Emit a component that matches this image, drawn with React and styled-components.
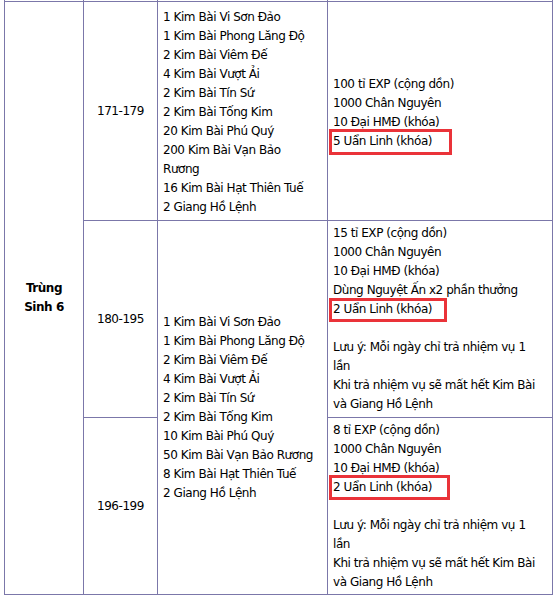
import React from 'react';
import styled, { createGlobalStyle } from 'styled-components';

const GlobalStyle = createGlobalStyle`
  html, body {
    margin: 0;
    padding: 0;
    background: #fff;
  }
  body {
    font-family: "DejaVu Sans", Verdana, sans-serif;
    font-size: 12px;
    color: #000;
  }
`;

const Page = styled.div`
  width: 556px;
  height: 597px;
  padding-left: 4px;
  box-sizing: border-box;
  overflow: hidden;
`;

const Table = styled.table`
  border-collapse: collapse;
  table-layout: fixed;
  width: 548px;
  letter-spacing: -0.45px;
`;

const Row = styled.tr`
  height: ${props => props.h}px;
`;

const Cell = styled.td`
  border: 1px solid #7b77a9;
  padding: ${props => `${props.pt || 0}px 5px 0`};
  vertical-align: middle;
  text-align: ${props => props.align || 'left'};
  line-height: 19px;
  font-weight: ${props => (props.bold ? 'bold' : 'normal')};
  white-space: nowrap;
`;

const CutCell = styled(Cell)`
  border-top: hidden;
  padding: 0;
  height: 1px;
  line-height: 1px;
`;

const Line = styled.div`
  min-height: 19px;
`;

const Marked = styled.div`
  position: relative;
  min-height: 19px;

  &::after {
    content: '';
    position: absolute;
    left: -4px;
    top: ${props => props.top}px;
    width: ${props => props.w}px;
    height: ${props => props.hgt}px;
    border: 3px solid #ea3339;
    box-sizing: border-box;
    pointer-events: none;
  }
`;

const Lines = ({ items }) =>
  items.map((t, i) => <Line key={i}>{t || '\u00a0'}</Line>);

const items171 = [
  '1 Kim Bài Vi Sơn Đảo',
  '1 Kim Bài Phong Lăng Độ',
  '2 Kim Bài Viêm Đế',
  '4 Kim Bài Vượt Ải',
  '2 Kim Bài Tín Sứ',
  '2 Kim Bài Tống Kim',
  '20 Kim Bài Phú Quý',
  '200 Kim Bài Vạn Bảo',
  'Rương',
  '16 Kim Bài Hạt Thiên Tuế',
  '2 Giang Hồ Lệnh',
];

const items180 = [
  '1 Kim Bài Vi Sơn Đảo',
  '1 Kim Bài Phong Lăng Độ',
  '2 Kim Bài Viêm Đế',
  '4 Kim Bài Vượt Ải',
  '2 Kim Bài Tín Sứ',
  '2 Kim Bài Tống Kim',
  '10 Kim Bài Phú Quý',
  '50 Kim Bài Vạn Bảo Rương',
  '8 Kim Bài Hạt Thiên Tuế',
  '2 Giang Hồ Lệnh',
];

const note = [
  '',
  'Lưu ý: Mỗi ngày chỉ trả nhiệm vụ 1',
  'lần',
  'Khi trả nhiệm vụ sẽ mất hết Kim Bài',
  'và Giang Hồ Lệnh',
];

export default function App() {
  return (
    <Page>
      <GlobalStyle />
      <Table>
        <colgroup>
          <col style={{ width: 79 }} />
          <col style={{ width: 74 }} />
          <col style={{ width: 170 }} />
          <col style={{ width: 225 }} />
        </colgroup>
        <tbody>
          <tr>
            <CutCell />
            <CutCell />
            <CutCell />
            <CutCell />
          </tr>
          <Row h={219}>
            <Cell rowSpan={3} align="center" bold>
              Trùng
              <br />
              Sinh 6
            </Cell>
            <Cell align="center">171-179</Cell>
            <Cell pt={2}>
              <Lines items={items171} />
            </Cell>
            <Cell pt={4}>
              <Lines
                items={['100 tỉ EXP (cộng dồn)', '1000 Chân Nguyên', '10 Đại HMĐ (khóa)']}
              />
              <Marked w={123} hgt={26} top={-3}>5 Uẩn Linh (khóa)</Marked>
            </Cell>
          </Row>
          <Row h={197}>
            <Cell align="center">180-195</Cell>
            <Cell rowSpan={2}>
              <Lines items={items180} />
            </Cell>
            <Cell>
              <Lines
                items={[
                  '15 tỉ EXP (cộng dồn)',
                  '1000 Chân Nguyên',
                  '10 Đại HMĐ (khóa)',
                  'Dùng Nguyệt Ấn x2 phần thưởng',
                ]}
              />
              <Marked w={118} hgt={24} top={-2}>2 Uẩn Linh (khóa)</Marked>
              <Lines items={note} />
            </Cell>
          </Row>
          <Row h={177}>
            <Cell align="center">196-199</Cell>
            <Cell>
              <Lines
                items={['8 tỉ EXP (cộng dồn)', '1000 Chân Nguyên', '10 Đại HMĐ (khóa)']}
              />
              <Marked w={121} hgt={25} top={-3}>2 Uẩn Linh (khóa)</Marked>
              <Lines items={note} />
            </Cell>
          </Row>
        </tbody>
      </Table>
    </Page>
  );
}
